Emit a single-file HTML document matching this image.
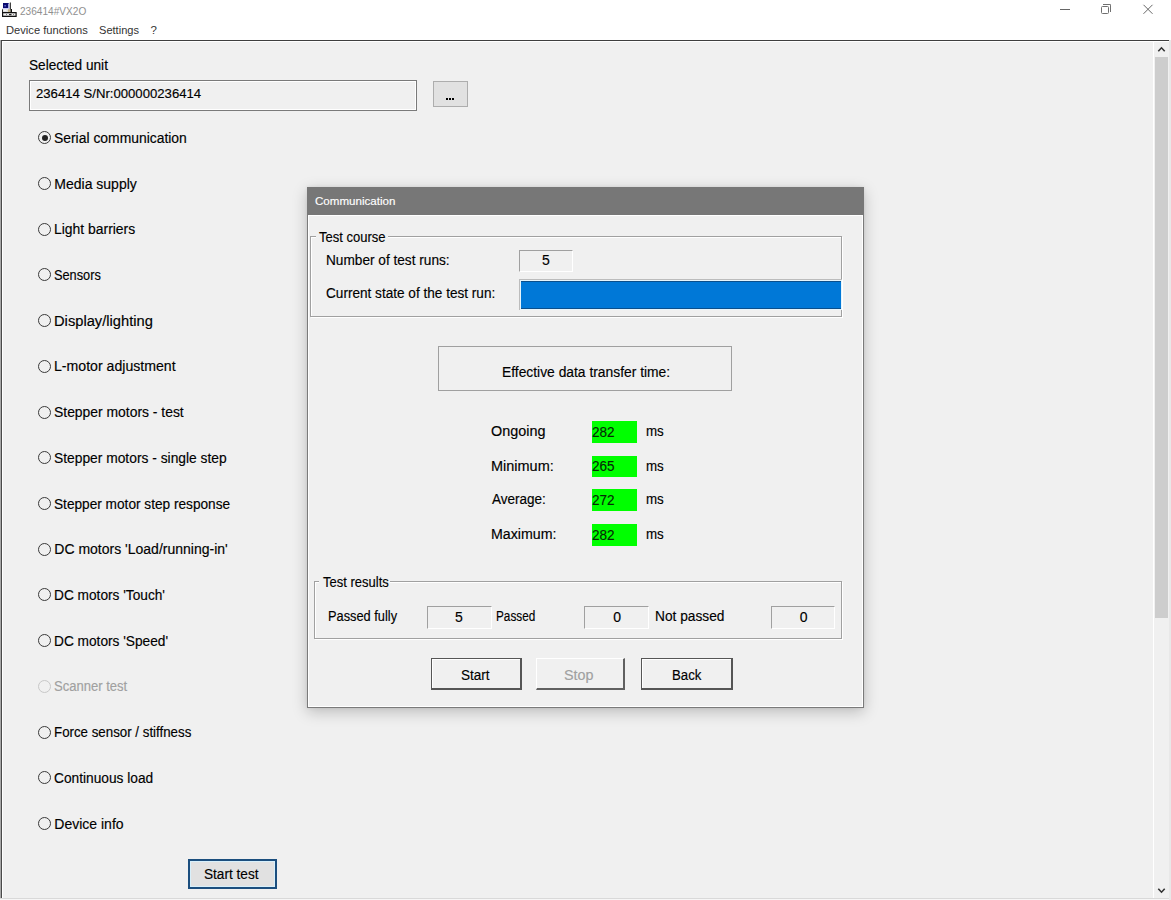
<!DOCTYPE html>
<html><head><meta charset="utf-8">
<style>
html,body{margin:0;padding:0;}
body{width:1171px;height:900px;overflow:hidden;position:relative;background:#fff;font-family:"Liberation Sans",sans-serif;}
.a{position:absolute;box-sizing:border-box;}
.t{position:absolute;white-space:pre;-webkit-text-stroke:0.15px currentColor;transform-origin:0 0;font-family:"Liberation Sans",sans-serif;}
.radio{position:absolute;width:13px;height:13px;border-radius:50%;border:1.3px solid #3a3a3a;box-sizing:border-box;background:transparent;}
.radio.dis{border-color:#c8c8c8;}
.dot{position:absolute;left:2.7px;top:2.7px;width:6px;height:6px;border-radius:50%;background:#222;}
.sunk{position:absolute;box-sizing:border-box;border-top:1px solid #a0a0a0;border-left:1px solid #a0a0a0;border-right:1px solid #fff;border-bottom:1px solid #fff;}
.green{position:absolute;background:#00ff00;}
.frame{position:absolute;box-sizing:border-box;border:1px solid #a0a0a0;box-shadow:1px 1px 0 #fff, inset 1px 1px 0 #fff;}
.cap{position:absolute;background:#f0f0f0;height:16px;}
.btn{position:absolute;box-sizing:border-box;background:#f0f0f0;}
</style></head><body>
<!-- title bar -->
<svg class="a" style="left:0;top:0" width="20" height="20" viewBox="0 0 20 20">
  <rect x="3" y="3" width="6" height="5" fill="#0a0a70"/>
  <rect x="4.5" y="5.2" width="1.2" height="1.2" fill="#8a9cff"/>
  <rect x="8.2" y="3.5" width="1.4" height="5" fill="#c8ccf8"/>
  <rect x="2.5" y="8" width="7" height="1.3" fill="#c8c8f4"/>
  <rect x="9.8" y="2.5" width="1" height="7" fill="#111"/>
  <rect x="2" y="9.3" width="1" height="3" fill="#222"/>
  <rect x="3" y="9.4" width="5.5" height="2.6" fill="#dcdcdc"/>
  <rect x="3.5" y="10" width="3" height="1" fill="#f8f8f8"/>
  <rect x="8" y="9.2" width="2.5" height="2.8" fill="#c4b488"/>
  <rect x="10.5" y="9" width="1.5" height="3.5" fill="#111"/>
  <rect x="2" y="12" width="14.7" height="5" fill="#111"/>
  <rect x="3.2" y="13.3" width="12.3" height="2.4" fill="#f4f4f4"/>
  <rect x="6" y="14" width="1" height="1" fill="#777"/>
  <rect x="9" y="14" width="2.5" height="1.2" fill="#222"/>
  <rect x="13" y="14" width="1" height="1" fill="#888"/>
</svg>
<!-- window controls -->
<div class="a" style="left:1060px;top:9px;width:10px;height:1px;background:#666;"></div>
<div class="a" style="left:1101px;top:6px;width:8px;height:8px;border:1px solid #707070;border-radius:1.5px;"></div>
<div class="a" style="left:1103px;top:4px;width:8px;height:8px;border-top:1px solid #707070;border-right:1px solid #707070;border-top-right-radius:1.5px;"></div>
<svg class="a" style="left:1142px;top:4px" width="12" height="12" viewBox="0 0 12 12"><path d="M1.5 0.8 L10.5 9.8 M10.5 0.8 L1.5 9.8" stroke="#666" stroke-width="1"/></svg>

<!-- main panel -->
<div class="a" style="left:0;top:40px;width:1171px;height:860px;background:#f0f0f0;"></div>
<div class="a" style="left:0;top:40px;width:1px;height:858px;background:#a8a8a8;"></div>
<div class="a" style="left:1px;top:40px;width:1px;height:858px;background:#4a4a4a;"></div>
<div class="a" style="left:1px;top:40px;width:1169px;height:1px;background:#3e3e3e;"></div>
<div class="a" style="left:2px;top:41px;width:1167px;height:1px;background:#fff;"></div>
<div class="a" style="left:2px;top:41px;width:1px;height:857px;background:#fff;"></div>
<div class="a" style="left:0;top:898px;width:1171px;height:1px;background:#d9d9d9;"></div><div class="a" style="left:0;top:899px;width:1171px;height:1px;background:#f6f6f6;"></div>
<div class="a" style="left:1169px;top:40px;width:2px;height:860px;background:#e8e8e8;"></div>
<!-- scrollbar -->
<div class="a" style="left:1153px;top:41px;width:1px;height:857px;background:#fff;"></div>
<div class="a" style="left:1155px;top:57px;width:13px;height:561px;background:#cdcdcd;"></div>
<svg class="a" style="left:1155px;top:44px" width="14" height="10" viewBox="0 0 14 10"><path d="M3.3 7.2 L6.5 3.8 L9.7 7.2" stroke="#333" stroke-width="1.6" fill="none"/></svg>
<svg class="a" style="left:1155px;top:885px" width="14" height="10" viewBox="0 0 14 10"><path d="M3.3 3.8 L6.5 7.2 L9.7 3.8" stroke="#333" stroke-width="1.6" fill="none"/></svg>

<!-- selected unit box -->
<div class="a" style="left:29px;top:80px;width:388px;height:31px;border:1px solid #7a7a7a;box-shadow:inset 0 0 0 1px #fff;"></div>
<div class="a" style="left:433px;top:81px;width:35px;height:26px;border:1px solid #adadad;background:#e1e1e1;"></div>
<div class="a" style="left:446px;top:98px;width:2px;height:2px;background:#000;"></div>
<div class="a" style="left:449px;top:98px;width:2px;height:2px;background:#000;"></div>
<div class="a" style="left:452px;top:98px;width:2px;height:2px;background:#000;"></div>

<div class="radio" style="left:38px;top:131.3px;"><div class="dot"></div></div>
<div class="radio" style="left:38px;top:177.0px;"></div>
<div class="radio" style="left:38px;top:222.7px;"></div>
<div class="radio" style="left:38px;top:268.4px;"></div>
<div class="radio" style="left:38px;top:314.1px;"></div>
<div class="radio" style="left:38px;top:359.9px;"></div>
<div class="radio" style="left:38px;top:405.6px;"></div>
<div class="radio" style="left:38px;top:451.3px;"></div>
<div class="radio" style="left:38px;top:497.0px;"></div>
<div class="radio" style="left:38px;top:542.7px;"></div>
<div class="radio" style="left:38px;top:588.4px;"></div>
<div class="radio" style="left:38px;top:634.1px;"></div>
<div class="radio dis" style="left:38px;top:679.8px;"></div>
<div class="radio" style="left:38px;top:725.5px;"></div>
<div class="radio" style="left:38px;top:771.2px;"></div>
<div class="radio" style="left:38px;top:817.0px;"></div>

<!-- start test button -->
<div class="a" style="left:188px;top:859px;width:89px;height:30px;border:2px solid #1b4e7e;background:#e1e1e1;box-shadow:inset 0 0 0 1px #d8f0fb;"></div>

<!-- dialog shadow -->
<div class="a" style="left:307px;top:187px;width:557px;height:521px;box-shadow:0 4px 14px rgba(0,0,0,0.22), 0 0 3px rgba(0,0,0,0.08);"></div>
<!-- dialog -->
<div class="a" style="left:307px;top:187px;width:557px;height:521px;background:#f0f0f0;border:1px solid #7a7a7a;"></div>
<div class="a" style="left:308px;top:215px;width:555px;height:492px;border:1px solid #fff;border-right-color:#fff;"></div>
<div class="a" style="left:307px;top:187px;width:557px;height:28px;background:#777;"></div>

<!-- test course frame -->
<div class="frame" style="left:310px;top:236px;width:532px;height:81px;"></div>
<div class="cap" style="left:316px;top:229px;width:72px;"></div>
<div class="sunk" style="left:519px;top:250px;width:54px;height:22px;"></div>
<div class="a" style="left:519px;top:279px;width:323px;height:31px;background:#e6f4fb;border-top:1px solid #bcbcbc;border-left:1px solid #bcbcbc;"></div>
<div class="a" style="left:521px;top:281px;width:320px;height:28px;background:#0078d7;border-top:1px solid #0a4f8c;border-bottom:1px solid #0a4f8c;"></div>

<!-- effective box -->
<div class="a" style="left:438px;top:346px;width:294px;height:45px;border:1px solid #a0a0a0;"></div>

<div class="green" style="left:592px;top:421px;width:45px;height:22px;"></div>
<div class="green" style="left:592px;top:456px;width:45px;height:21px;"></div>
<div class="green" style="left:592px;top:489px;width:45px;height:22px;"></div>
<div class="green" style="left:592px;top:524px;width:45px;height:22px;"></div>

<!-- test results frame -->
<div class="frame" style="left:314px;top:581px;width:528px;height:58px;"></div>
<div class="cap" style="left:319px;top:574px;width:71px;"></div>
<div class="sunk" style="left:427px;top:606px;width:65px;height:23px;"></div>
<div class="sunk" style="left:584px;top:606px;width:65px;height:23px;"></div>
<div class="sunk" style="left:771px;top:606px;width:64px;height:23px;"></div>

<!-- buttons -->
<div class="btn" style="left:431px;top:658px;width:91px;height:32px;border:1px solid #555;border-right-width:2px;border-bottom-width:2px;box-shadow:inset 1px 1px 0 #fff;"></div>
<div class="btn" style="left:536px;top:658px;width:89px;height:32px;border-top:1px solid #fff;border-left:1px solid #fff;border-right:2px solid #606060;border-bottom:2px solid #606060;"></div>
<div class="btn" style="left:641px;top:658px;width:92px;height:32px;border:1px solid #555;border-right-width:2px;border-bottom-width:2px;box-shadow:inset 1px 1px 0 #fff;"></div>

<div class="t" style="left:20.42px;top:6.00px;font-size:11.5px;line-height:11.5px;color:#8f8f8f;transform:scaleX(0.8784);-webkit-text-stroke:0;">236414#VX2O</div>
<div class="t" style="left:5.63px;top:25.00px;font-size:11.5px;line-height:11.5px;color:#333;transform:scaleX(0.9699);-webkit-text-stroke:0;">Device functions</div>
<div class="t" style="left:99.24px;top:25.00px;font-size:11.5px;line-height:11.5px;color:#333;transform:scaleX(0.9625);-webkit-text-stroke:0;">Settings</div>
<div class="t" style="left:150.50px;top:25.00px;font-size:11.5px;line-height:11.5px;color:#333;-webkit-text-stroke:0;">?</div>
<div class="t" style="left:28.82px;top:57.60px;font-size:14px;line-height:14px;color:#000;transform:scaleX(0.9750);">Selected unit</div>
<div class="t" style="left:36.03px;top:86.80px;font-size:13.5px;line-height:13.5px;color:#000;transform:scaleX(0.9734);">236414 S/Nr:000000236414</div>
<div class="t" style="left:54.31px;top:130.90px;font-size:14px;line-height:14px;color:#000;transform:scaleX(0.9924);">Serial communication</div>
<div class="t" style="left:54.30px;top:176.61px;font-size:14px;line-height:14px;color:#000;">Media supply</div>
<div class="t" style="left:54.31px;top:222.32px;font-size:14px;line-height:14px;color:#000;transform:scaleX(0.9938);">Light barriers</div>
<div class="t" style="left:54.39px;top:268.03px;font-size:14px;line-height:14px;color:#000;transform:scaleX(0.9120);">Sensors</div>
<div class="t" style="left:54.25px;top:313.74px;font-size:14px;line-height:14px;color:#000;transform:scaleX(1.0500);">Display/lighting</div>
<div class="t" style="left:54.29px;top:359.45px;font-size:14px;line-height:14px;color:#000;transform:scaleX(1.0083);">L-motor adjustment</div>
<div class="t" style="left:54.31px;top:405.16px;font-size:14px;line-height:14px;color:#000;transform:scaleX(0.9923);">Stepper motors - test</div>
<div class="t" style="left:54.31px;top:450.87px;font-size:14px;line-height:14px;color:#000;transform:scaleX(0.9862);">Stepper motors - single step</div>
<div class="t" style="left:54.32px;top:496.58px;font-size:14px;line-height:14px;color:#000;transform:scaleX(0.9754);">Stepper motor step response</div>
<div class="t" style="left:54.30px;top:542.29px;font-size:14px;line-height:14px;color:#000;">DC motors 'Load/running-in'</div>
<div class="t" style="left:54.32px;top:588.00px;font-size:14px;line-height:14px;color:#000;transform:scaleX(0.9777);">DC motors 'Touch'</div>
<div class="t" style="left:54.32px;top:633.71px;font-size:14px;line-height:14px;color:#000;transform:scaleX(0.9783);">DC motors 'Speed'</div>
<div class="t" style="left:54.37px;top:679.42px;font-size:14px;line-height:14px;color:#a0a0a0;transform:scaleX(0.9308);">Scanner test</div>
<div class="t" style="left:54.35px;top:725.13px;font-size:14px;line-height:14px;color:#000;transform:scaleX(0.9503);">Force sensor / stiffness</div>
<div class="t" style="left:54.32px;top:770.84px;font-size:14px;line-height:14px;color:#000;transform:scaleX(0.9800);">Continuous load</div>
<div class="t" style="left:54.30px;top:816.55px;font-size:14px;line-height:14px;color:#000;">Device info</div>
<div class="t" style="left:204.43px;top:866.60px;font-size:14px;line-height:14px;color:#000;transform:scaleX(0.9727);">Start test</div>
<div class="t" style="left:315.29px;top:196.00px;font-size:11.5px;line-height:11.5px;color:#fff;transform:scaleX(1.0064);">Communication</div>
<div class="t" style="left:318.70px;top:229.90px;font-size:14px;line-height:14px;color:#000;transform:scaleX(0.9296);">Test course</div>
<div class="t" style="left:325.93px;top:252.60px;font-size:14px;line-height:14px;color:#000;transform:scaleX(0.9744);">Number of test runs:</div>
<div class="t" style="left:542.00px;top:252.90px;font-size:14px;line-height:14px;color:#000;">5</div>
<div class="t" style="left:325.93px;top:286.00px;font-size:14px;line-height:14px;color:#000;transform:scaleX(0.9709);">Current state of the test run:</div>
<div class="t" style="left:501.81px;top:364.50px;font-size:14px;line-height:14px;color:#000;transform:scaleX(0.9881);">Effective data transfer time:</div>
<div class="t" style="left:490.57px;top:423.90px;font-size:14px;line-height:14px;color:#000;transform:scaleX(1.0275);">Ongoing</div>
<div class="t" style="left:591.93px;top:424.70px;font-size:14px;line-height:14px;color:#062806;transform:scaleX(0.9682);">282</div>
<div class="t" style="left:646.45px;top:423.90px;font-size:14px;line-height:14px;color:#000;transform:scaleX(0.9529);">ms</div>
<div class="t" style="left:490.57px;top:458.60px;font-size:14px;line-height:14px;color:#000;transform:scaleX(1.0339);">Minimum:</div>
<div class="t" style="left:591.93px;top:459.40px;font-size:14px;line-height:14px;color:#062806;transform:scaleX(0.9682);">265</div>
<div class="t" style="left:646.45px;top:458.60px;font-size:14px;line-height:14px;color:#000;transform:scaleX(0.9529);">ms</div>
<div class="t" style="left:491.60px;top:491.90px;font-size:14px;line-height:14px;color:#000;transform:scaleX(0.9655);">Average:</div>
<div class="t" style="left:591.93px;top:492.70px;font-size:14px;line-height:14px;color:#062806;transform:scaleX(0.9682);">272</div>
<div class="t" style="left:646.45px;top:491.90px;font-size:14px;line-height:14px;color:#000;transform:scaleX(0.9529);">ms</div>
<div class="t" style="left:490.59px;top:526.80px;font-size:14px;line-height:14px;color:#000;transform:scaleX(1.0143);">Maximum:</div>
<div class="t" style="left:591.93px;top:527.60px;font-size:14px;line-height:14px;color:#062806;transform:scaleX(0.9682);">282</div>
<div class="t" style="left:646.45px;top:526.80px;font-size:14px;line-height:14px;color:#000;transform:scaleX(0.9529);">ms</div>
<div class="t" style="left:322.80px;top:575.00px;font-size:14px;line-height:14px;color:#000;transform:scaleX(0.9286);">Test results</div>
<div class="t" style="left:327.89px;top:608.70px;font-size:14px;line-height:14px;color:#000;transform:scaleX(0.9147);">Passed fully</div>
<div class="t" style="left:455.00px;top:609.50px;font-size:14px;line-height:14px;color:#000;">5</div>
<div class="t" style="left:495.96px;top:608.70px;font-size:14px;line-height:14px;color:#000;transform:scaleX(0.8400);">Passed</div>
<div class="t" style="left:613.30px;top:609.50px;font-size:14px;line-height:14px;color:#000;">0</div>
<div class="t" style="left:655.42px;top:608.70px;font-size:14px;line-height:14px;color:#000;transform:scaleX(0.9797);">Not passed</div>
<div class="t" style="left:799.80px;top:609.50px;font-size:14px;line-height:14px;color:#000;">0</div>
<div class="t" style="left:461.03px;top:667.60px;font-size:14px;line-height:14px;color:#000;transform:scaleX(0.9655);">Start</div>
<div class="t" style="left:564.48px;top:667.60px;font-size:14px;line-height:14px;color:#a0a0a0;transform:scaleX(1.0222);">Stop</div>
<div class="t" style="left:671.76px;top:667.60px;font-size:14px;line-height:14px;color:#000;transform:scaleX(0.9433);">Back</div>
</body></html>
